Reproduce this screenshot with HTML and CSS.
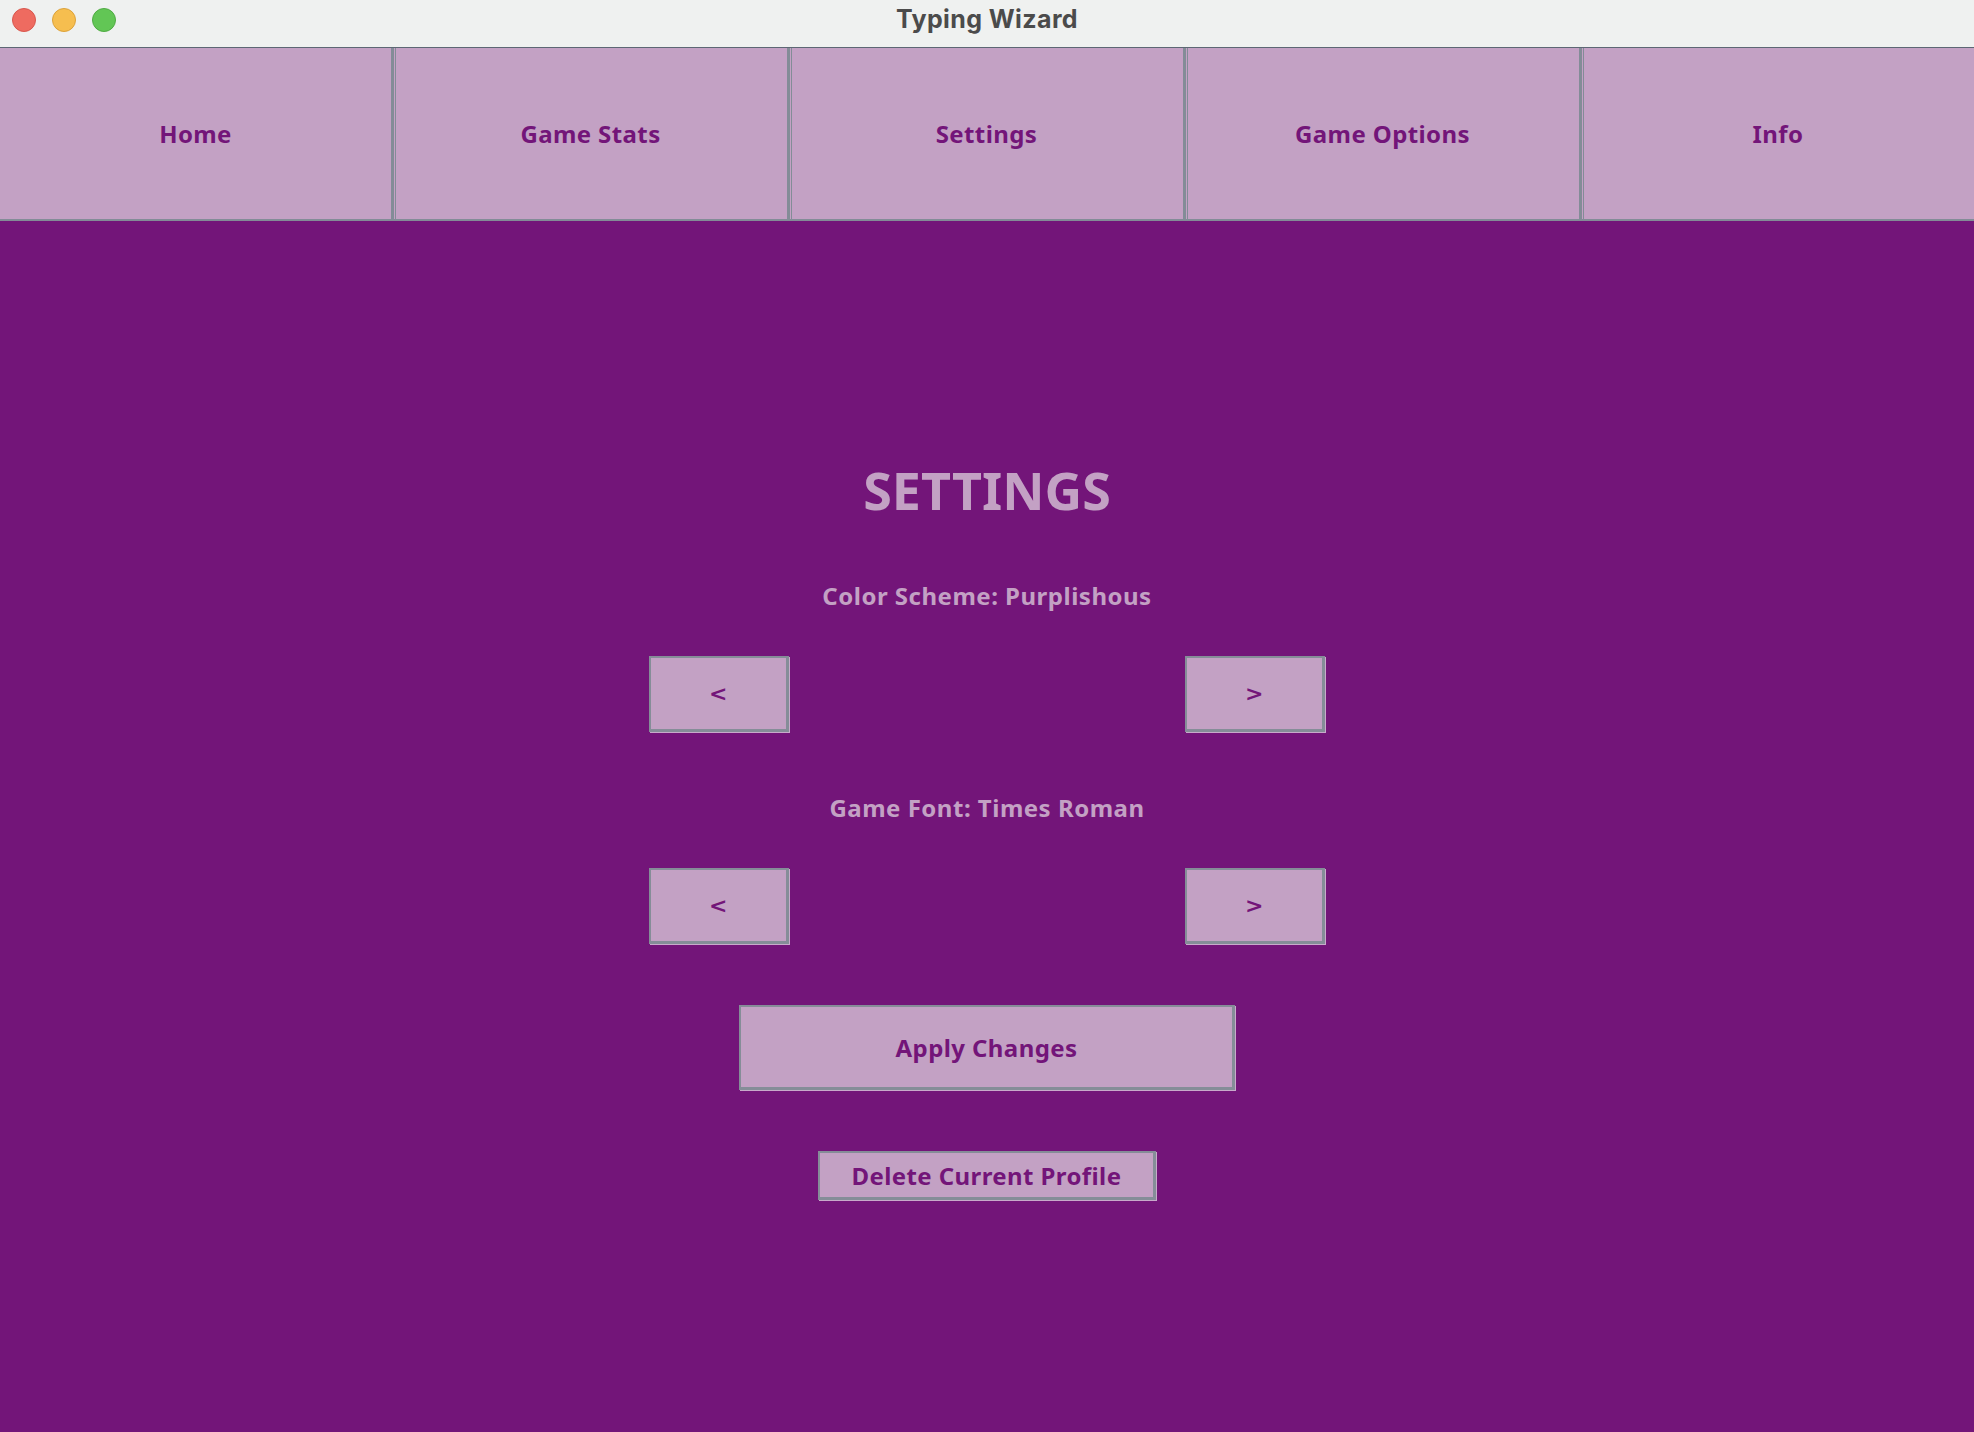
FILE: index.html
```html
<!DOCTYPE html>
<html>
<head>
<meta charset="utf-8">
<title>Typing Wizard</title>
<link rel="stylesheet" href="styles.css">
</head>
<body>
<div class="window">
  <header class="titlebar">
    <div class="lights">
      <span class="light red"></span>
      <span class="light yellow"></span>
      <span class="light green"></span>
    </div>
    <div class="title">Typing Wizard</div>
  </header>
  <nav class="nav">
    <button class="nav-btn">Home</button>
    <button class="nav-btn">Game Stats</button>
    <button class="nav-btn">Settings</button>
    <button class="nav-btn">Game Options</button>
    <button class="nav-btn">Info</button>
  </nav>
  <main class="main">
    <h1 class="heading">SETTINGS</h1>
    <div class="label label-first">Color Scheme: Purplishous</div>
    <div class="arrows">
      <button class="btn arrow">&lt;</button>
      <button class="btn arrow">&gt;</button>
    </div>
    <div class="label">Game Font: Times Roman</div>
    <div class="arrows">
      <button class="btn arrow">&lt;</button>
      <button class="btn arrow">&gt;</button>
    </div>
    <button class="btn apply">Apply Changes</button>
    <button class="btn delete">Delete Current Profile</button>
  </main>
</div>
</body>
</html>
```

FILE: styles.css
```css
html, body {
  margin: 0;
  padding: 0;
  height: 100%;
}
body {
  background: #731579;
  font-family: "Noto Sans", "Open Sans", sans-serif;
}
.window {
  display: flex;
  flex-direction: column;
  height: 1432px;
}
.titlebar {
  position: relative;
  height: 48px;
  flex: 0 0 48px;
  box-sizing: border-box;
  padding-bottom: 10px;
  background: #eff1f0;
  border-bottom: 1px solid #5d6774;
  display: flex;
  align-items: center;
  justify-content: center;
}
.lights {
  position: absolute;
  left: 12px;
  top: 8px;
  display: flex;
  gap: 16px;
}
.light {
  width: 22px;
  height: 22px;
  border-radius: 50%;
  border: 1px solid rgba(0,0,0,0.12);
}
.red { background: #ee6b60; border-color: #d8574d; }
.yellow { background: #f6be4f; border-color: #dca23a; }
.green { background: #62c655; border-color: #4fab43; }
.title {
  font-family: Inter, "Noto Sans", sans-serif;
  font-weight: 700;
  font-size: 25px;
  color: #4b4b4b;
  letter-spacing: 0.4px;
}
.nav {
  display: grid;
  grid-template-columns: 393px 396px 396px 396px 1fr;
  background: #c3a1c4;
  height: 173px;
  flex: 0 0 173px;
}
.nav-btn {
  min-width: 0;
  margin: 0;
  padding: 0;
  background: #c3a1c4;
  border: none;
  border-left: 1px solid #838c97;
  border-right: 2px solid #838c97;
  border-bottom: 2px solid #838c97;
  box-shadow: inset 1px 0 0 #c3a1c4, inset 2px 0 0 #838c97;
  color: #731579;
  font-family: "Noto Sans", "Open Sans", sans-serif;
  font-weight: 700;
  font-size: 24px;
  letter-spacing: 0.4px;
}
.nav-btn:first-child { border-left: none; box-shadow: none; }
.nav-btn:last-child { border-right: none; }
.main {
  flex: 1;
  display: flex;
  flex-direction: column;
  align-items: center;
  padding-top: 239px;
}
.heading {
  margin: 0;
  font-size: 52px;
  line-height: 60px;
  font-weight: 700;
  color: #c3a1c4;
}
.label {
  font-size: 24px;
  line-height: 34px;
  font-weight: 700;
  color: #c3a1c4;
  letter-spacing: 0.5px;
}
.label-first { margin-top: 59px; }
.arrows {
  display: flex;
  gap: 396px;
  margin-top: 43px;
  margin-bottom: 59px;
}
.btn {
  margin: 0;
  padding: 0;
  background: #c3a1c4;
  color: #731579;
  font-family: "Noto Sans", "Open Sans", sans-serif;
  font-weight: 700;
  font-size: 24px;
  letter-spacing: 0.4px;
  border-style: solid;
  border-color: #858d98;
  border-width: 2px 3px 3px 2px;
  box-shadow: 1px 1px 0 #c8aacb;
}
.arrow {
  width: 140px;
  height: 76px;
  font-family: "DejaVu Sans", sans-serif;
  font-weight: 700;
  font-size: 22px;
}
.apply {
  width: 496px;
  height: 85px;
  margin-top: 2px;
}
.delete {
  width: 338px;
  height: 49px;
  margin-top: 61px;
}
```
